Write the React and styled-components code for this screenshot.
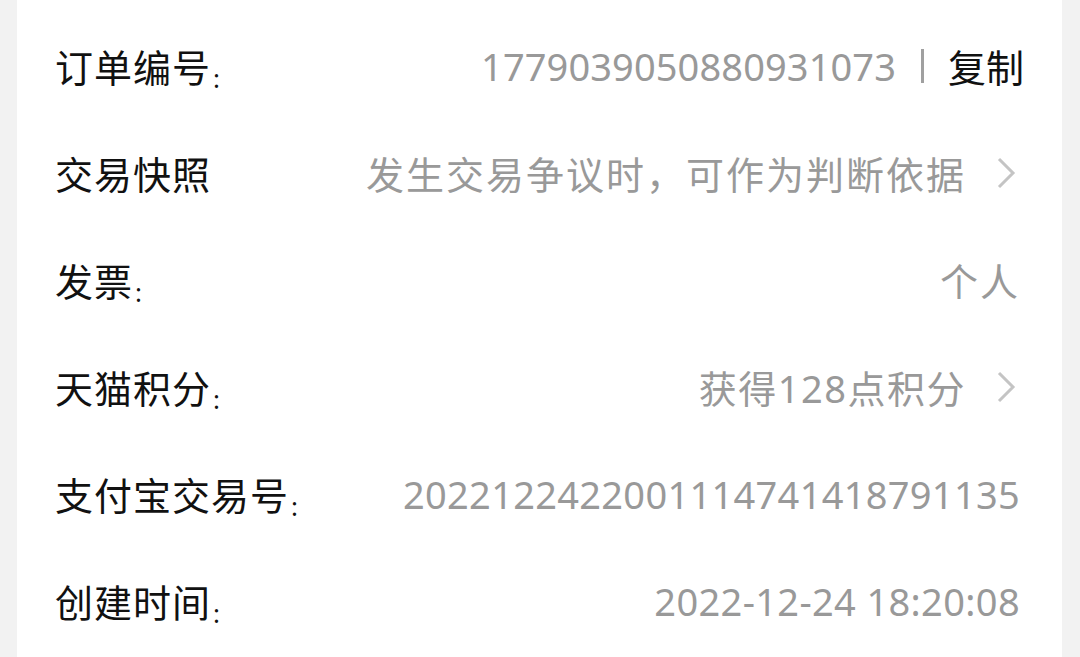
import React from 'react'
import styled, { createGlobalStyle } from 'styled-components'

const GlobalStyle = createGlobalStyle`
  html, body {
    margin: 0;
    padding: 0;
    background: #f2f2f2;
  }
  body {
    font-family: "Noto Sans", "Noto Sans CJK SC", sans-serif;
  }
`

const Page = styled.div`
  height: 657px;
  overflow: hidden;
  padding: 0 18px 0 17px;
`

const Card = styled.div`
  background: #ffffff;
  height: 100%;
  padding: 12px 42px 0 38px;
  box-sizing: border-box;
`

const Row = styled.div`
  height: 107px;
  display: flex;
  align-items: center;
  justify-content: space-between;
  font-size: 38px;
`

const Label = styled.div`
  color: #111;
  white-space: nowrap;
  letter-spacing: 1px;
`

const Colon = styled.span`
  font-family: "Noto Sans", sans-serif;
  font-size: 26px;
  margin-left: 2px;
  position: relative;
  top: 6px;
`

const Value = styled.div`
  display: flex;
  align-items: center;
  color: #999;
  white-space: nowrap;
  letter-spacing: ${p => p.$spacing};
`

const Divider = styled.span`
  display: inline-block;
  width: 3px;
  height: 34px;
  background: #a0a0a0;
  margin: 0 24px 0 25px;
`

const Copy = styled.span`
  color: #111;
  letter-spacing: 0;
  margin-right: -4px;
`

const Chevron = styled.svg`
  margin-left: 30px;
  margin-right: 4px;
  flex-shrink: 0;
`

const Arrow = () => (
  <Chevron width="20" height="32" viewBox="0 0 20 32">
    <polyline
      points="3,2 17,16 3,30"
      fill="none"
      stroke="#c4c4c4"
      strokeWidth="3"
    />
  </Chevron>
)

const rows = [
  { label: '订单编号', colon: true, value: '1779039050880931073', copy: true, spacing: '0.1px' },
  { label: '交易快照', value: '发生交易争议时，可作为判断依据', arrow: true, spacing: '2px' },
  { label: '发票', colon: true, value: '个人', spacing: '2px' },
  { label: '天猫积分', colon: true, value: '获得128点积分', arrow: true, spacing: '1.5px' },
  { label: '支付宝交易号', colon: true, value: '2022122422001114741418791135', spacing: '0.3px' },
  { label: '创建时间', colon: true, value: '2022-12-24 18:20:08', spacing: '0.35px' }
]

export default function App() {
  return (
    <Page>
      <GlobalStyle />
      <Card>
        {rows.map(row => (
          <Row key={row.label}>
            <Label>
              {row.label}
              {row.colon && <Colon>:</Colon>}
            </Label>
            <Value $spacing={row.spacing}>
              {row.value}
              {row.copy && (
                <>
                  <Divider />
                  <Copy>复制</Copy>
                </>
              )}
              {row.arrow && <Arrow />}
            </Value>
          </Row>
        ))}
      </Card>
    </Page>
  )
}
